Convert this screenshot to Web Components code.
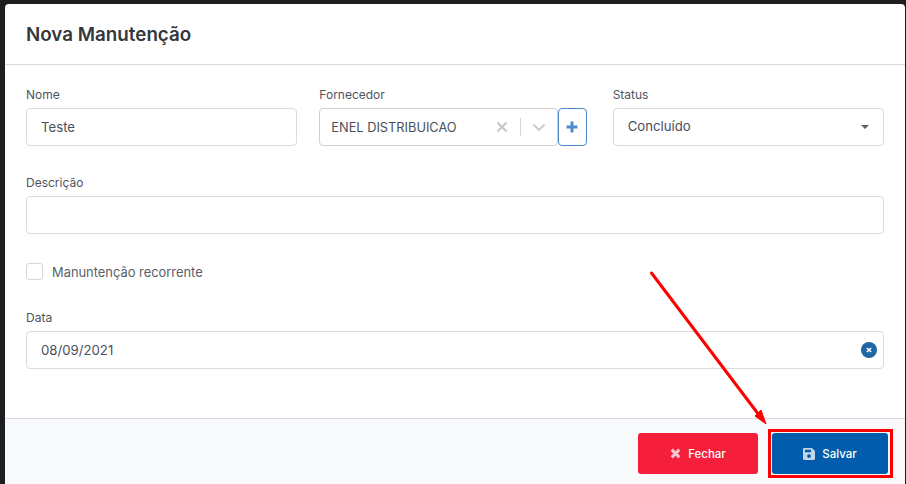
<!DOCTYPE html>
<html lang="pt-BR">
<head>
<meta charset="utf-8">
<title>Nova Manutenção</title>
<style>
  html, body { margin: 0; height: 100%; overflow: hidden; }
  body { background: #1d1e20; font-family: Inter, "Open Sans", sans-serif; color: #3e4450; }
</style>
</head>
<body>
<modal-page>
  <span slot="title">Nova Manutenção</span>

  <form-field label="Nome"><text-box value="Teste"></text-box></form-field>
  <form-field label="Fornecedor">
    <supplier-select value="ENEL DISTRIBUICAO"></supplier-select>
  </form-field>
  <form-field label="Status"><status-select value="Concluído"></status-select></form-field>
  <form-field label="Descrição" wide><text-box></text-box></form-field>
  <check-row wide label="Manuntenção recorrente"></check-row>
  <form-field label="Data" wide><text-box value="08/09/2021" clearable></text-box></form-field>

  <action-button slot="footer" kind="close">Fechar</action-button>
  <action-button slot="footer" kind="save" marked>Salvar</action-button>
</modal-page>

<script>
class ModalPage extends HTMLElement {
  constructor() {
    super();
    this.attachShadow({ mode: "open" });
    this.shadowRoot.innerHTML = `
      <style>
        :host { display: block; position: relative; padding: 4px 1px 0 5px; height: 480px; }
        .modal { background: #fff; border-radius: 4px 4px 0 0; height: 480px; display: flex; flex-direction: column; }
        header { display: flex; align-items: center; padding: 1px 21px 0; box-sizing: border-box; height: 61px; border-bottom: 1px solid #d8dbe0; font-size: 18.8px; font-weight: 600; color: #35373c; }
        .body { flex: 1; padding: 21px 21px 0; display: grid; grid-template-columns: repeat(3, 1fr); column-gap: 22px; row-gap: 28px; align-content: start; }
        ::slotted([wide]) { grid-column: 1 / -1; }
        footer { box-sizing: border-box; height: 66px; border-top: 1px solid #d5d8de; background: #f8f9fb; display: flex; justify-content: flex-end; align-items: flex-start; padding: 14px 17px 0 0; gap: 14px; }
        .arrow { position: absolute; left: 640px; top: 262px; pointer-events: none; }
      </style>
      <div class="modal">
        <header><slot name="title"></slot></header>
        <div class="body"><slot></slot></div>
        <footer><slot name="footer"></slot></footer>
      </div>
      <svg class="arrow" width="140" height="175" viewBox="640 262 140 175">
        <path d="M651.5 273L759 415" stroke="#fe0000" stroke-width="3" stroke-linecap="round" fill="none"/>
        <path d="M766 424L755 416L761 410Z" fill="#fe0000" stroke="#fe0000" stroke-width="1"/>
      </svg>
    `;
  }
}

class FormField extends HTMLElement {
  constructor() {
    super();
    this.attachShadow({ mode: "open" });
    this.shadowRoot.innerHTML = `
      <style>
        :host { display: block; min-width: 0; }
        label { display: block; height: 22px; line-height: 18px; font-size: 12px; color: #4f545e; }
      </style>
      <label></label>
      <slot></slot>
    `;
    this.shadowRoot.querySelector("label").textContent = this.getAttribute("label");
  }
}

class TextBox extends HTMLElement {
  constructor() {
    super();
    this.attachShadow({ mode: "open" });
    this.shadowRoot.innerHTML = `
      <style>
        :host { display: flex; align-items: center; box-sizing: border-box; height: 38px; padding: 0 6px 0 14px; border: 1px solid #dcdcdc; border-radius: 4px; background: #fff; font-size: 13.2px; color: #4a505b; }
        span { flex: 1; }
        svg { display: block; }
      </style>
      <span></span>
    `;
    if (this.hasAttribute("clearable")) {
      this.shadowRoot.innerHTML += `
        <svg width="16" height="16" viewBox="0 0 16 16">
          <circle cx="8" cy="8" r="8" fill="#1f67a3"/>
          <path d="M5.8 6L10.2 10M10.2 6L5.8 10" stroke="#fff" stroke-width="1.6"/>
        </svg>`;
    }
    this.shadowRoot.querySelector("span").textContent = this.getAttribute("value") || "";
  }
}

class SupplierSelect extends HTMLElement {
  constructor() {
    super();
    this.attachShadow({ mode: "open" });
    this.shadowRoot.innerHTML = `
      <style>
        :host { display: flex; margin-right: 4px; }
        .box { flex: 1; box-sizing: border-box; height: 38px; display: flex; align-items: center; padding-left: 11px; border: 1px solid #cfcfcf; border-radius: 4px; font-size: 12.8px; color: #4a505b; }
        .name { flex: 1; white-space: nowrap; }
        .x { margin-right: 12px; display: block; }
        .sep { width: 1px; height: 18px; background: #d4d4d4; }
        .down { margin: 0 11px 0 11px; display: block; }
        .add { width: 29px; height: 38px; box-sizing: border-box; border: 1px solid #4c8bc9; border-radius: 4px; display: flex; align-items: center; justify-content: center; background: #fff; }
      </style>
      <div class="box">
        <span class="name"></span>
        <svg class="x" width="12" height="12" viewBox="0 0 12 12"><path d="M1.5 1.5L10.5 10.5M10.5 1.5L1.5 10.5" stroke="#c9c9c9" stroke-width="2.2"/></svg>
        <i class="sep"></i>
        <svg class="down" width="14" height="9" viewBox="0 0 14 9"><path d="M1.5 1.5L7 7L12.5 1.5" stroke="#cccccc" stroke-width="2" fill="none"/></svg>
      </div>
      <div class="add">
        <svg width="12" height="12" viewBox="0 0 12 12"><path d="M6 .5V11.5M.5 6H11.5" stroke="#4d8cca" stroke-width="3"/></svg>
      </div>
    `;
    this.shadowRoot.querySelector(".name").textContent = this.getAttribute("value");
  }
}

class StatusSelect extends HTMLElement {
  constructor() {
    super();
    this.attachShadow({ mode: "open" });
    this.shadowRoot.innerHTML = `
      <style>
        :host { display: flex; align-items: center; box-sizing: border-box; height: 38px; padding: 0 14px; border: 1px solid #dcdcdc; border-radius: 4px; font-size: 13.2px; color: #4a505b; }
        span { flex: 1; padding-bottom: 2px; }
        i { border: 4px solid transparent; border-top: 4px solid #5a5f69; border-bottom: 0; width: 0; height: 0; }
      </style>
      <span></span><i></i>
    `;
    this.shadowRoot.querySelector("span").textContent = this.getAttribute("value");
  }
}

class CheckRow extends HTMLElement {
  constructor() {
    super();
    this.attachShadow({ mode: "open" });
    this.shadowRoot.innerHTML = `
      <style>
        :host { display: flex; align-items: center; gap: 9px; height: 17px; margin: 1px 0; font-size: 12.9px; color: #5a5f69; }
        i { width: 17px; height: 17px; box-sizing: border-box; border: 1px solid #d6d6d6; border-radius: 3px; background: #fff; }
        span { padding-top: 1px; }
      </style>
      <i></i><span></span>
    `;
    this.shadowRoot.querySelector("span").textContent = this.getAttribute("label");
  }
}

class ActionButton extends HTMLElement {
  constructor() {
    super();
    this.attachShadow({ mode: "open" });
    const save = this.getAttribute("kind") === "save";
    const icon = save
      ? `<svg width="12" height="12" viewBox="0 0 12 12"><path fill-rule="evenodd" fill="#c3d5e9" d="M1.2 0H9L12 3V10.8C12 11.5 11.5 12 10.8 12H1.2C.5 12 0 11.5 0 10.8V1.2C0 .5.5 0 1.2 0ZM2 1.7V4.2H8V1.7ZM6 6.2A1.9 1.9 0 1 0 6 10 1.9 1.9 0 1 0 6 6.2Z"/></svg>`
      : `<svg width="11" height="11" viewBox="0 0 11 11"><path d="M1.7 1.7L9.3 9.3M9.3 1.7L1.7 9.3" stroke="#fbc5cd" stroke-width="3.1"/></svg>`;
    this.shadowRoot.innerHTML = `
      <style>
        :host { display: block; position: relative; }
        .btn { box-sizing: border-box; height: 41px; display: flex; align-items: center; justify-content: center; gap: 7px; border-radius: 3px; color: #fff; font-size: 11.5px; font-weight: 500; }
        .close { width: 120px; background: #f51f3b; }
        .save { width: 116px; background: #015dab; }
        .mark { position: absolute; inset: -4px -5px -4px -4px; border: 3px solid #fe0000; box-sizing: border-box; pointer-events: none; }
      </style>
      <div class="btn ${save ? "save" : "close"}">${icon}<slot></slot></div>
      ${this.hasAttribute("marked") ? '<div class="mark"></div>' : ""}
    `;
  }
}

customElements.define("modal-page", ModalPage);
customElements.define("form-field", FormField);
customElements.define("text-box", TextBox);
customElements.define("supplier-select", SupplierSelect);
customElements.define("status-select", StatusSelect);
customElements.define("check-row", CheckRow);
customElements.define("action-button", ActionButton);
</script>
</body>
</html>
